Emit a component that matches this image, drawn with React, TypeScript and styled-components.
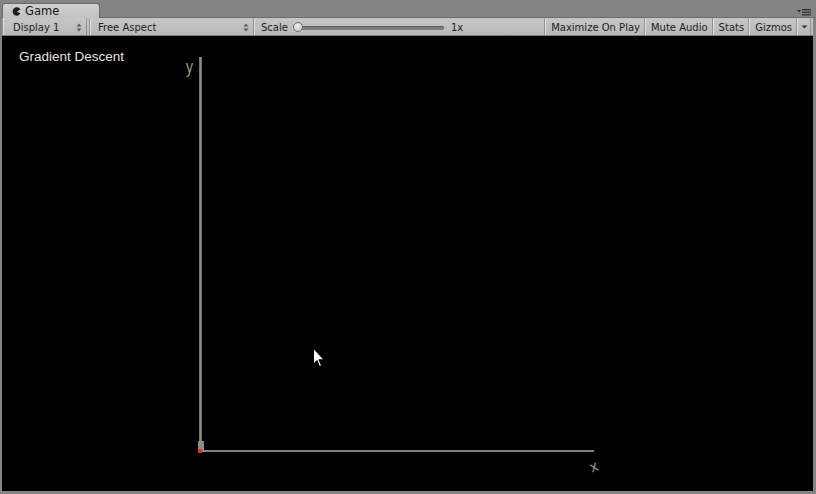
import React from "react";
import styled, { createGlobalStyle } from "styled-components";

const GlobalStyle = createGlobalStyle`
  html, body { margin: 0; padding: 0; background: #828282; }
  body { font-family: "DejaVu Sans", sans-serif; }
`;

const Window = styled.div`
  width: 816px;
  height: 494px;
  background: #848484;
  display: flex;
  flex-direction: column;
  overflow: hidden;
`;

const TabStrip = styled.div`
  height: 18px;
  display: flex;
  align-items: flex-end;
  padding-left: 2px;
  padding-right: 4px;
  box-sizing: border-box;
  border-bottom: 1px solid #6c6c6c;
`;

const Tab = styled.div`
  width: 98px;
  height: 15px;
  margin-bottom: -1px;
  box-sizing: border-box;
  background: linear-gradient(#d0d0d0, #c1c1c1);
  border: 1px solid #6a6a6a;
  border-bottom: none;
  border-radius: 3px 3px 0 0;
  display: flex;
  align-items: center;
  padding-left: 9px;
  gap: 4px;
  font-size: 11.5px;
  color: #151515;
`;

const Spacer = styled.div`
  flex: 1;
`;

const MenuIcon = styled.div`
  width: 16px;
  height: 8px;
  margin-bottom: 1px;
  display: flex;
  align-items: center;
`;

const Toolbar = styled.div`
  height: 18px;
  margin: 0 3px 0 2px;
  padding-right: 2px;
  box-sizing: border-box;
  background: linear-gradient(#c6c6c6, #b9b9b9);
  border-bottom: 1px solid #7a7a7a;
  display: flex;
  align-items: stretch;
  font-size: 10px;
  color: #1c1c1c;
  line-height: 1;
`;

const Dropdown = styled.div<{ $w: number; $pad: number }>`
  width: ${(p) => p.$w}px;
  box-sizing: border-box;
  display: flex;
  align-items: center;
  justify-content: space-between;
  padding: 2px 4px 0 ${(p) => p.$pad}px;
  border-left: 1px solid #e0e0e0;
  border-right: 1px solid #929292;
`;

const Gap = styled.div<{ $w: number }>`
  width: ${(p) => p.$w}px;
  border-right: 1px solid #929292;
`;

const ScaleGroup = styled.div`
  flex: 1;
  display: flex;
  align-items: center;
  padding: 2px 0 0 6px;
  border-left: 1px solid #e0e0e0;
  border-right: 1px solid #929292;
`;

const SliderTrack = styled.div`
  position: relative;
  width: 148px;
  height: 4px;
  margin-left: 8px;
  margin-right: 7px;
  border-radius: 2px;
  background: #7c7c7c;
  box-shadow: inset 0 1px 0 #5e5e5e;
`;

const SliderKnob = styled.div`
  position: absolute;
  left: -3px;
  top: -4px;
  width: 10px;
  height: 10px;
  box-sizing: border-box;
  border-radius: 50%;
  background: radial-gradient(circle at 40% 35%, #ececec, #c4c4c4);
  border: 1px solid #6e6e6e;
`;

const ToolButton = styled.div`
  display: flex;
  align-items: center;
  padding: 2px 4px 0 5px;
  border-left: 1px solid #e0e0e0;
  border-right: 1px solid #929292;
  white-space: nowrap;
`;

const ArrowButton = styled.div`
  width: 12px;
  display: flex;
  align-items: center;
  justify-content: center;
  padding-top: 1px;
  border-left: 1px solid #e0e0e0;
  border-right: 1px solid #929292;
`;

const Body = styled.div`
  flex: 1;
  display: flex;
  padding: 0 3px 3px 2px;
`;

const Viewport = styled.div`
  position: relative;
  flex: 1;
  background: #000;
  overflow: hidden;
`;

const Title = styled.div`
  position: absolute;
  left: 17px;
  top: 13px;
  font-family: "Liberation Sans", Arial, sans-serif;
  font-size: 13.5px;
  color: #e4e4e4;
`;

const Plot = styled.svg`
  position: absolute;
  left: 0;
  top: 0;
`;

const Cursor = styled.svg`
  position: absolute;
  left: 311px;
  top: 312px;
`;

const UpDown = () => (
  <svg width="6" height="9" viewBox="0 0 6 9">
    <path d="M3 0.5 L5.5 3.5 H0.5 Z" fill="#5a5a5a" />
    <path d="M3 8.5 L5.5 5.5 H0.5 Z" fill="#5a5a5a" />
  </svg>
);

export default function App() {
  return (
    <>
      <GlobalStyle />
      <Window>
        <TabStrip>
          <Tab>
            <svg width="9" height="9" viewBox="0 0 9 9">
              <path d="M8.4 2.4 A4.2 4.2 0 1 0 8.4 6.6 L5 4.5 Z" fill="#1e1e1e" />
            </svg>
            <span>Game</span>
          </Tab>
          <Spacer />
          <MenuIcon>
            <svg width="16" height="8" viewBox="0 0 16 8">
              <path d="M1 2 H5 L3 4.5 Z" fill="#2a2a2a" />
              <rect x="6" y="1" width="9" height="1.2" fill="#2a2a2a" />
              <rect x="6" y="3.6" width="9" height="1.2" fill="#2a2a2a" />
              <rect x="6" y="6.2" width="9" height="1.2" fill="#2a2a2a" />
            </svg>
          </MenuIcon>
        </TabStrip>
        <Toolbar>
          <Gap $w={0} />
          <Dropdown $w={84} $pad={9}>
            <span>Display 1</span>
            <UpDown />
          </Dropdown>
          <Gap $w={2} />
          <Dropdown $w={164} $pad={7}>
            <span>Free Aspect</span>
            <UpDown />
          </Dropdown>
          <ScaleGroup>
            <span>Scale</span>
            <SliderTrack>
              <SliderKnob />
            </SliderTrack>
            <span>1x</span>
          </ScaleGroup>
          <ToolButton>Maximize On Play</ToolButton>
          <ToolButton>Mute Audio</ToolButton>
          <ToolButton>Stats</ToolButton>
          <ToolButton>Gizmos</ToolButton>
          <ArrowButton>
            <svg width="7" height="4" viewBox="0 0 7 4">
              <path d="M0.5 0.5 H6.5 L3.5 3.5 Z" fill="#3a3a3a" />
            </svg>
          </ArrowButton>
        </Toolbar>
        <Body>
          <Viewport>
            <Title>Gradient Descent</Title>
            <Plot width="811" height="455" viewBox="0 0 811 455">
              <rect x="197" y="21" width="3" height="395" fill="#7a776d" />
              <rect x="198" y="21" width="1" height="395" fill="#8e8a80" />
              <rect x="198" y="414" width="394" height="2" fill="#858277" />
              <rect x="196" y="405" width="6" height="11" fill="#8f8c82" />
              <rect x="196" y="413" width="4" height="4" fill="#e2321f" />
              <text
                x="184"
                y="37"
                fontFamily="Liberation Sans, Arial, sans-serif"
                fontSize="14"
                fill="#a09c8e"
                transform="scale(1,1.25) translate(0,-7.5)"
              >
                y
              </text>
              <text
                x="588"
                y="435"
                fontFamily="Liberation Sans, Arial, sans-serif"
                fontSize="15"
                fill="#a19d8d"
                transform="rotate(-20 593 430)"
              >
                x
              </text>
            </Plot>
            <Cursor width="14" height="22" viewBox="0 0 14 22">
              <path
                d="M0.5 0.5 L0.5 16 L4 12.5 L6.5 18.5 L8.5 17.6 L6 11.8 L11 11.8 Z"
                fill="#ffffff"
                stroke="#000"
                strokeWidth="1"
              />
            </Cursor>
          </Viewport>
        </Body>
      </Window>
    </>
  );
}
